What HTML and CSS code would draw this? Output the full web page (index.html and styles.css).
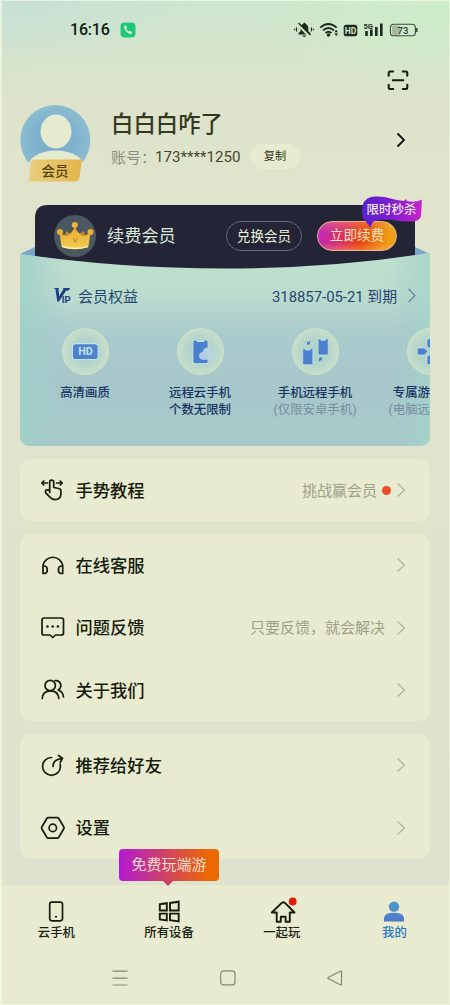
FILE: index.html
```html
<!DOCTYPE html>
<html lang="zh-CN">
<head>
<meta charset="utf-8">
<title>我的</title>
<link rel="stylesheet" href="styles.css">
</head>
<body>
<div class="screen">
  <header class="status">
    <span class="clock">16:16</span>
    <svg class="call" width="16" height="16" viewBox="0 0 16 16"><rect x=".5" y=".5" width="15" height="15" rx="4" fill="#1ec878"/><path d="M4.400 3.800Q5 3 5.800 3.400L6.900 5.500 6.100 6.800q.9 1.700 2.700 2.800L10 8.900 12 10.100q.3.900-.6 1.600-1.200.8-3.400-.7-3-2.200-3.900-5.200-.3-1.300.3-2Z" fill="#dff5dc"/></svg>
    <svg class="sys" width="126" height="20" viewBox="293 19 126 20">
      <g fill="#1c2a1c">
        <path d="M298.500 33.500v-1.500l2-1.800v-3.200a5 5 0 0 1 3-4.400v-.8h1.800v.8a5 5 0 0 1 3 4.400v3.200l2 1.800v1.500ZM302 34.500h4.500q-2.200 2.800-4.500 0Z"/>
        <path d="M297.500 23 309.500 35" stroke="#d0e5c9" stroke-width="2.600"/>
        <path d="M298.500 22 310.500 34" stroke="#1c2a1c" stroke-width="1.400"/>
        <circle cx="294.500" cy="28.500" r=".7"/><circle cx="313.500" cy="28.500" r=".7"/>
        <path d="M296.500 26.500v4M311.500 26.500v4" stroke="#1c2a1c" stroke-width="1.200"/>
        <circle cx="328.500" cy="34" r="1.800"/>
        <path d="m334.300 31.200 1.900-2.400 1.900 2.400ZM334.300 32.600l1.900 2.400 1.900-2.400Z"/>
      </g>
      <g fill="none" stroke="#1c2a1c" stroke-width="1.900"><path d="M320.300 26.600q8-7.400 16.400 0M323 29.400q5.500-5 11 0M325.500 31.900q3-2.500 6 0" /></g>
      <rect x="343.700" y="23.700" width="13.600" height="11.600" rx="2.500" fill="#1c2a1c"/>
      <text x="350.500" y="32.800" class="hd-sys">HD</text>
      <text x="363.500" y="27.800" class="g5">5G</text>
      <g fill="#1c2a1c"><rect x="365.200" y="30" width="2.600" height="5"/><rect x="370" y="28.500" width="2.600" height="6.500"/><rect x="375" y="26" width="2.600" height="9"/><rect x="380" y="22.500" width="2.600" height="12.500"/></g>
      <rect x="392" y="24.500" width="8" height="9.500" rx="2" fill="#a9b9a3"/>
      <rect x="390.400" y="23.200" width="25" height="11.600" rx="3.400" fill="none" stroke="#3c4a3a" stroke-width="1.100"/><path d="M416.900 27v4" stroke="#3c4a3a" stroke-width="1.600"/>
      <text x="403" y="32.500" class="batt">73</text>
    </svg>
  </header>
  <div class="topbar">
    <svg width="22" height="22" viewBox="387 69 22 22" fill="none" stroke="#121708" stroke-width="2" stroke-linecap="round" stroke-linejoin="round"><path d="M388.700 75.800v-2.800q0-1.500 1.500-1.500h3M402.800 71.500h3q1.500 0 1.500 1.500v2.800M407.300 84.700v2.800q0 1.500-1.500 1.500h-3M393.200 89h-3q-1.500 0-1.500-1.500v-2.800M392.800 80.200h10.500"/></svg>
  </div>

  <section class="profile">
    <div class="avatar">
      <svg width="70" height="80" viewBox="20 105 70 80"><defs><radialGradient id="av"><stop offset="0" stop-color="#76a9cb"/><stop offset=".6" stop-color="#80b3ce"/><stop offset="1" stop-color="#8bbccf"/></radialGradient><linearGradient id="gd"><stop offset="0" stop-color="#e9cf80"/><stop offset="1" stop-color="#e4b549"/></linearGradient><clipPath id="ac"><circle cx="55.300" cy="140" r="35"/></clipPath></defs><circle cx="55.300" cy="140" r="35" fill="url(#av)"/><g clip-path="url(#ac)" fill="#e4ebcf"><ellipse cx="56" cy="131.500" rx="15.500" ry="17"/><ellipse cx="56" cy="167" rx="28" ry="16.500"/></g><path d="M34 159.500H82L79.500 177q-.8 4.500-5 4.500H28.500L30.700 163q.5-3.500 3.300-3.500Z" fill="url(#gd)"/></svg>
      <span class="avatar-tag">会员</span>
    </div>
    <div class="who">
      <div class="name">白白白咋了</div>
      <div class="account"><span class="muted">账号：</span><span class="num">173****1250</span><span class="copy">复制</span></div>
    </div>
    <svg class="go" width="10" height="16" viewBox="0 0 10 16"><path d="m1.500 1.500 6.500 6.500-6.500 6.500" fill="none" stroke="#10130b" stroke-width="1.800"/></svg>
  </section>

  <section class="vip">
    <svg class="vip-bg" width="410" height="241" viewBox="20 205 410 241">
      <defs>
        <linearGradient id="pv" x1="0" y1="0" x2="0" y2="1"><stop offset="0" stop-color="#bfe1ce"/><stop offset=".22" stop-color="#bbdccd"/><stop offset=".4" stop-color="#abcccd"/><stop offset=".65" stop-color="#a7c7cb"/><stop offset="1" stop-color="#a8cbca"/></linearGradient>
        <linearGradient id="pe"><stop offset="0" stop-color="#a0d1c9" stop-opacity=".9"/><stop offset=".12" stop-color="#a4c9cc" stop-opacity="0"/><stop offset=".9" stop-color="#a4c9cc" stop-opacity="0"/><stop offset="1" stop-color="#a5d4c8" stop-opacity=".8"/></linearGradient>
      </defs>
      <path d="M20 254 35 247V262ZM430 254 415 247V262Z" fill="#7da5c9"/>
      <path d="M35 275V218Q35 205 48 205H403Q415 205 415 217V275Z" fill="#232537"/>
      <path d="M20 254Q120 268.500 225 268.500T430 253V435Q430 446 419 446H31Q20 446 20 435Z" fill="url(#pv)"/>
      <path d="M20 254Q120 268.500 225 268.500T430 253V435Q430 446 419 446H31Q20 446 20 435Z" fill="url(#pe)"/>
    </svg>
    <div class="vip-head">
      <svg width="42" height="42" viewBox="54 214 42 42"><defs><linearGradient id="cr" x1="0" y1="0" x2="0" y2="1"><stop offset="0" stop-color="#e8a62e"/><stop offset="1" stop-color="#f2cf50"/></linearGradient></defs><circle cx="75" cy="235" r="21" fill="#4b585f"/><path d="m64.500 235 2-5 4 3ZM79.500 233l4-3 2 5Z" fill="#d08228"/><path d="M59.500 231.500Q65 236 69 233.500 73 231 74.800 225 76.500 231 81 233.500 85 236 90.500 231.500L88.500 245.500Q75 250.500 61.500 245.500Z" fill="url(#cr)"/><path d="M62 245.500q13 4 26 0" fill="none" stroke="#ffeea6" stroke-width="1.500"/><circle cx="60" cy="231" r="3" fill="#e9af38"/><circle cx="74.800" cy="224" r="3" fill="#edb53d"/><circle cx="90.500" cy="231" r="3" fill="#e9af38"/><path d="m73 237 2.200 4 2.200-4" fill="none" stroke="#c98b23" stroke-width="1.200"/></svg>
      <span class="vip-title">续费会员</span>
      <span class="btn line">兑换会员</span>
      <span class="btn hot">立即续费
        <span class="flag"><svg width="61" height="34" viewBox="360 194 61 34"><defs><linearGradient id="fl"><stop offset="0" stop-color="#5920cc"/><stop offset=".5" stop-color="#801dce"/><stop offset="1" stop-color="#c824cc"/></linearGradient></defs><path d="M361 208Q362 196 374 195.500C386 195 392 199 403 200L405 198 406 200Q414 202 421 198.500L420 215Q419 220.500 409 220.500C396 221 386 216 373.500 220Q370.500 221.500 369.500 227L364.500 220Q360.500 218 361 208Z" fill="url(#fl)"/></svg><b>限时秒杀</b></span>
      </span>
    </div>
    <div class="vip-row">
      <svg width="18" height="17" viewBox="53 287 18 17"><path d="M53.500 288h5.500l-.5 1 .6 7 4.500-7-1-1H70l-1 2.200-3 .5-7 10.800h-1.800l-1.800-12.500Z" fill="#1f3f7e"/><text x="61.700" y="302.600" class="ip">IP</text></svg>
      <span class="rights">会员权益</span>
      <span class="expire">318857-05-21 到期</span>
      <svg width="10" height="17" viewBox="0 0 10 17"><path d="m1.500 1.800 6.500 6.700-6.500 6.700" fill="none" stroke="#5a7fab" stroke-width="1.200"/></svg>
    </div>
    <div class="perks">
      <div class="perk"><svg class="disc" viewBox="0 0 46 46"><defs><radialGradient id="dg"><stop offset="0" stop-color="#aed0cb"/><stop offset=".6" stop-color="#b5d5cb"/><stop offset="1" stop-color="#c7dfc9"/></radialGradient><g id="disc"><circle cx="23" cy="23" r="22.500" fill="url(#dg)" stroke="#cbe2ca" stroke-width="1"/></g></defs><use href="#disc"/><rect x="10.300" y="15.300" width="25" height="15.500" rx="3" fill="#4b83d0" stroke="#c8e1e4" stroke-width="1"/><text x="23" y="26.500" class="hd">HD</text></svg><p>高清画质</p></div>
      <div class="perk"><svg class="disc" viewBox="0 0 46 46"><use href="#disc"/><path d="M17.500 11.500H19l1 1.700h6l1-1.700h1.500q2 0 2 2V33q0 2-2 2h-11q-2 0-2-2V13.500q0-2 2-2Z" fill="#4b80d0" stroke="#cae5df"/><path d="M24.500 31q-3-1-3-4 .2-3 3.500-3.300Q26 18.700 30.500 19q4 .7 4.500 4.500 3 .5 2.700 3.500-.2 3-3 4Z" fill="#b9d4e1" opacity=".93"/></svg><p>远程云手机<br>个数无限制</p></div>
      <div class="perk"><svg class="disc" viewBox="0 0 46 46"><use href="#disc"/><g fill="#4b80d0" stroke="#cae5df" stroke-width=".8"><path d="M11.500 20h1l1 1.500h4l1-1.500h1q1 0 1 1V35q0 1-1 1h-8q-1 0-1-1V21q0-1 1-1ZM26.500 10.500h1l1 1.500h4l1-1.500h1q1 0 1 1V25.500q0 1-1 1h-8q-1 0-1-1V11.500q0-1 1-1Z"/></g><path d="m14.500 16.500.5-3.500 1 1q1.200-1 2-2-.2 2.200-.8 3.100l.9.900ZM29.500 28.500l-.3 3.700-1-.9q-1 1-2.300 1.700.3-2 1-2.800l-.8-.8Z" fill="#4b80c0"/></svg><p>手机远程手机<small>(仅限安卓手机)</small></p></div>
      <div class="perk"><svg class="disc" viewBox="0 0 46 46"><use href="#disc"/><g fill="#4b80d0" stroke="#cae5df" stroke-width=".8"><path d="M11.500 19.500h5.500l3.500 3.500-3.500 3.500h-5.500q-1.500 0-1.500-1.500V21q0-1.500 1.500-1.500ZM19.500 17.500v-5Q19.500 10.500 21.500 10.500h5.500v7L23.300 21ZM19.500 28.500V34q0 2 2 2h5.500v-7.500L23.300 25ZM35 19.500h-6l-4 3.500 4 3.500h6Z"/></g></svg><p>专属游戏键盘<small>(电脑远程手机)</small></p></div>
    </div>
  </section>

  <main class="menu">
    <section class="group">
      <div class="item"><svg class="ico" viewBox="40 477 26 26"><path d="M47.500 483h-5.500m1.800-2-2 2 2 2M56.500 483h5.500m-1.800-2 2 2-2 2M49.700 492.500V482.200q0-2 2-2t2 2v5.300l5 1q2.200.4 2.200 2.600v3.200q-.3 5.200-5.700 5.400-2.800 0-4.800-2l-4.200-4.400q-1.200-1.300-.7-2.500.7-1.300 2.300-.9l1.900.8"/></svg><span>手势教程</span><em>挑战赢会员</em><i class="dot"></i><svg class="chev" viewBox="0 0 10 16"><path d="m1.500 1.500 7 6.500-7 6.500"/></svg></div>
    </section>
    <section class="group">
      <div class="item"><svg class="ico" viewBox="40 552 26 26"><path d="M43 573v-7.500a10 10 0 0 1 19.700 0V573M43 566h1.500q2.800.2 2.800 3.700T44.500 573.500H43ZM62.700 566h-1.500q-2.800.2-2.800 3.700t2.800 3.800h1.500Z"/></svg><span>在线客服</span><svg class="chev" viewBox="0 0 10 16"><path d="m1.500 1.500 7 6.500-7 6.500"/></svg></div>
      <div class="item"><svg class="ico" viewBox="40 614.500 26 26"><path d="M44 617.500H61.500q2 0 2 2v13q0 2-2 2h-6l-2.700 2.500-2.700-2.500H44q-2 0-2-2v-13q0-2 2-2Z"/><g fill="#171c0d" stroke="none"><circle cx="47.500" cy="626" r="1.250"/><circle cx="52.700" cy="626" r="1.250"/><circle cx="57.900" cy="626" r="1.250"/></g></svg><span>问题反馈</span><em>只要反馈，就会解决</em><svg class="chev" viewBox="0 0 10 16"><path d="m1.500 1.500 7 6.500-7 6.500"/></svg></div>
      <div class="item"><svg class="ico" viewBox="40 677.500 26 26"><circle cx="50.200" cy="686" r="5.200"/><path d="M42.300 699q.3-7.700 8.200-7.700 7.700 0 8.300 7.700M55 681.200h1.200q4.600.5 4.600 4.800 0 3-2.600 4.500 4.800 1.500 5.300 7"/></svg><span>关于我们</span><svg class="chev" viewBox="0 0 10 16"><path d="m1.500 1.500 7 6.500-7 6.500"/></svg></div>
    </section>
    <section class="group">
      <div class="item"><svg class="ico" viewBox="40 752.500 26 26"><path d="M51.500 758a8.900 8.900 0 1 0 8.900 8.900q0-1-.2-2M53 767q0-7 8.500-7.800M58.500 756l4 2.800-2.300 4.200"/></svg><span>推荐给好友</span><svg class="chev" viewBox="0 0 10 16"><path d="m1.500 1.500 7 6.500-7 6.500"/></svg></div>
      <div class="item"><svg class="ico" viewBox="40 814.500 26 26"><path d="M48.300 817.200h9q1 0 1.500.8l5 8.500q.5.900 0 1.800l-5 8.500q-.5.800-1.500.8h-9q-1 0-1.500-.8l-5-8.500q-.5-.9 0-1.800l5-8.500q.5-.8 1.500-.8Z"/><circle cx="52.800" cy="827.400" r="3.700"/></svg><span>设置</span><svg class="chev" viewBox="0 0 10 16"><path d="m1.500 1.500 7 6.500-7 6.500"/></svg></div>
    </section>
  </main>

  <nav class="tabs">
    <div class="tab"><svg class="tico" viewBox="43.500 898 26 26"><rect x="50.200" y="902.200" width="12.800" height="18.600" rx="2.200"/><path d="M56.500 916v1.500" stroke-width="2"/></svg><span>云手机</span></div>
    <div class="tab"><svg class="tico" viewBox="156.200 898 26 26"><path d="m160 904.200 7-1v7.300H160ZM170.200 903l8.700-1.300v8.800h-8.700ZM160 913.600h7v6.900l-7-1.100ZM170.200 913.600h8.700v7.800l-8.700-1.200Z" stroke-linejoin="miter" stroke-width="1.900"/></svg><span>所有设备</span><span class="tip">免费玩端游</span></div>
    <div class="tab"><svg class="tico" viewBox="269 898 26 26"><path d="m271.800 912.500 10-9.600q1.600-1.300 3.200 0l9.500 9.600h-4.700v9.300h-4.200v-5h-4.800v5h-4.100v-9.300Z" stroke-width="1.900"/><circle cx="292.700" cy="901.500" r="3.900" fill="#e81b0a" stroke="none"/></svg><span>一起玩</span></div>
    <div class="tab on"><svg class="tico" viewBox="381 898 26 26"><defs><linearGradient id="me" x1="0" x2="0" y1="901" y2="922" gradientUnits="userSpaceOnUse"><stop offset="0" stop-color="#4f9dce"/><stop offset="1" stop-color="#5275cb"/></linearGradient></defs><g fill="url(#me)" stroke="none"><circle cx="394" cy="906.600" r="5.200"/><path d="M384 921.500V918q.5-5.200 10-5.200t10 5.200v3.500Z"/></g></svg><span>我的</span></div>
  </nav>
  <footer class="sysnav">
    <svg width="16" height="18" viewBox="0 0 16 18"><path d="M.5 2.200h15M.5 9.200h15M.5 16h15"/></svg>
    <svg width="16" height="18" viewBox="0 0 16 18"><rect x=".7" y="1.900" width="14.300" height="14" rx="3"/></svg>
    <svg width="16" height="18" viewBox="0 0 16 18"><path d="M14.500 2.800v12.400q0 1.200-1.200.6L1.200 9.600q-.8-.6 0-1.200l12.100-6.200q1.200-.6 1.200.6Z"/></svg>
  </footer>
</div>
</body>
</html>
```
FILE: styles.css
```css
* { box-sizing: border-box; }
body { margin: 0; font-family: Roboto, "Noto Sans CJK SC", sans-serif; color: #182010; }
svg { display: block; flex: none; }
p { margin: 0; }
em, i { font-style: normal; }

.screen {
  position: relative;
  width: 450px; height: 1005px; overflow: hidden;
  display: flex; flex-direction: column;
  background:
    radial-gradient(ellipse 200px 70px at 0 0, rgba(196,221,216,.75), rgba(196,221,216,0)),
    radial-gradient(ellipse 200px 80px at 100% 10px, rgba(204,238,200,.85), rgba(204,238,200,0)),
    linear-gradient(#cee5cf 0, #d6e4cc 50px, #dde3cc 100px, #e0e4cc 190px, #dfe3cd 100%);
}
.screen::after {
  content: ""; position: absolute; inset: 0; pointer-events: none;
  border: 1px solid rgba(240,250,224,.75); border-width: 1px 1px 1px 2px;
}

.status { height: 59px; display: flex; align-items: center; padding-left: 70px; }
.clock { font: 500 16px/20px Roboto, sans-serif; width: 40px; color: #101b10; white-space: nowrap; letter-spacing: -.2px; }
.call { margin-left: 10px; }
.sys { margin-left: 157px; }
.hd-sys { font: 700 8.500px Roboto, sans-serif; fill: #d5e7cf; text-anchor: middle; }
.g5 { font: 700 7.500px Roboto, sans-serif; fill: #1c2a1c; }
.batt { font: 500 9.500px Roboto, sans-serif; fill: #2c392b; text-anchor: middle; }

.topbar { height: 46px; display: flex; justify-content: flex-end; padding: 10px 41px 0; }

.profile { height: 100px; padding: 0 44px 0 20px; display: flex; align-items: flex-start; }
.avatar { position: relative; width: 70px; height: 80px; }
.avatar-tag { position: absolute; left: 0; right: 0; top: 57px; text-align: center; font-size: 13.500px; line-height: 18px; font-weight: 500; color: #574211; }
.who { margin-left: 21px; flex: 1; }
.name { font-size: 22.400px; line-height: 30px; font-weight: 500; color: #34381f; margin-top: 4px; }
.account { display: flex; align-items: center; height: 25px; margin-top: 5px; font-size: 15px; color: #43472f; }
.muted { width: 44px; color: #8b907a; white-space: nowrap; }
.num { width: 85px; font-size: 15.100px; white-space: nowrap; }
.copy { margin-left: 10px; width: 50px; height: 25px; border-radius: 13px; background: #e7ebd0; font-size: 11.200px; line-height: 25px; text-align: center; color: #303520; }
.go { margin-top: 27px; }

.vip { position: relative; height: 241px; margin: 0 20px; }
.vip-bg { position: absolute; inset: 0; }
.vip-head, .vip-row, .perks { position: relative; }
.vip-head { display: flex; align-items: center; height: 61px; padding: 0 33px 0 34px; }
.vip-title { margin-left: 11px; flex: 1; color: #d8e8da; font-size: 17.200px; line-height: 24px; }
.btn { height: 30px; border-radius: 15px; font-size: 13.600px; line-height: 28px; text-align: center; color: #eeefd8; }
.line { width: 76px; border: 1px solid #646a76; }
.hot { position: relative; width: 80px; margin-left: 15px; border: 1px solid #efb58c; background: linear-gradient(rgba(255,210,140,.25), transparent 40%, transparent 75%, rgba(255,210,130,.3)), linear-gradient(100deg, #bd27c1, #df315f 35%, #e8470b 57%, #eda018 90%); color: #fae5bd; line-height: 27px; }
.flag { position: absolute; left: 43px; top: -27px; width: 61px; height: 34px; }
.flag svg { position: absolute; inset: 0; }
.flag b { position: relative; display: block; font-size: 12.500px; line-height: 30px; font-weight: 500; color: #eee5ee; white-space: nowrap; }
.vip-row { display: flex; align-items: center; height: 60px; padding: 0 13px 2px 33px; color: #244571; }
.rights { margin-left: 7px; font-size: 15px; flex: 1; }
.expire { font-size: 14.850px; margin-right: 10px; }
.ip { font: 700 9.500px Roboto, sans-serif; fill: #1f3f7e; }
.perks { display: flex; height: 120px; padding-left: 7.500px; overflow: hidden; border-bottom-right-radius: 11px; }
.perk { flex: none; width: 115px; display: flex; flex-direction: column; align-items: center; padding-top: 2px; text-align: center; }
.disc { width: 47px; height: 47px; }
.perk p { margin-top: 10px; font-size: 12.400px; line-height: 16.500px; font-weight: 500; color: #173462; white-space: nowrap; }
.perk small { display: block; font-size: 12.400px; font-weight: 400; color: #758da0; }
.hd { font: 700 10.500px Roboto, sans-serif; fill: #c5e2e5; text-anchor: middle; }

.menu { height: 439px; padding: 13px 20px 0; display: flex; flex-direction: column; gap: 13px; }
.group { border-radius: 11px; background: #e8ebd0; }
.item { height: 62.300px; display: flex; align-items: center; padding: 0 24px 0 20px; }
.ico { width: 26px; height: 26px; fill: none; stroke: #171c0d; stroke-width: 1.700; stroke-linecap: round; stroke-linejoin: round; }
.item span { margin-left: 9.500px; flex: 1; font-size: 17.300px; line-height: 24px; padding-top: 1px; font-weight: 500; color: #171c0d; }
.item em { font-size: 15px; line-height: 22px; padding-top: 1px; color: #9da189; margin-right: 11px; }
.dot { width: 9px; height: 9px; border-radius: 50%; background: #e94e26; margin: 0 5px 0 -6px; }
.chev { width: 10px; height: 16px; fill: none; stroke: #afb49c; stroke-width: 1.200; }

.tabs { position: relative; height: 64px; display: flex; background: #e8ebd0; }
.tab { position: relative; width: 112.700px; flex: none; display: flex; flex-direction: column; align-items: center; padding-top: 13px; font-size: 12.400px; line-height: 17px; font-weight: 500; }
.tab > span { margin-top: 0; white-space: nowrap; }
.tico { width: 26px; height: 26px; overflow: visible; fill: none; stroke: #171c0d; stroke-width: 1.700; stroke-linejoin: round; }
.on { color: #287ac9; }
.tab > .tip { position: absolute; left: 6.300px; top: -36px; width: 100px; height: 32px; border-radius: 4px; background: linear-gradient(90deg, #b31ad1, #ec6800 90%); color: #f4dfcb; font-size: 15px; line-height: 32px; font-weight: 400; text-align: center; }
.tip::after { content: ""; position: absolute; left: 44px; top: 32px; border: 5px solid transparent; border-top-color: #cf3c73; border-bottom: 0; }
.sysnav { flex: 1; background: #e8ebd0; display: flex; justify-content: space-between; padding: 20px 107px 0 112px; }
.sysnav svg { fill: none; stroke: #84897a; stroke-width: 1.200; }
```
